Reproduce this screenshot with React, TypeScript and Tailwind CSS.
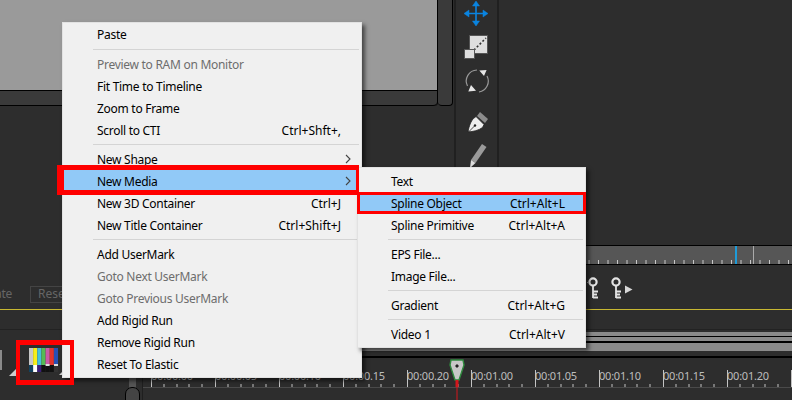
import React from "react";

type Item = { t: string; s?: string; d?: boolean; arrow?: boolean; on?: boolean };
type Row = Item | "sep";

const main: Row[] = [
  { t: "Preview to RAM on Monitor", d: true },
  { t: "Fit Time to Timeline" },
  { t: "Zoom to Frame" },
  { t: "Scroll to CTI", s: "Ctrl+Shft+," },
  "sep",
  { t: "New Shape", arrow: true },
  { t: "New Media", arrow: true, on: true },
  { t: "New 3D Container", s: "Ctrl+J" },
  { t: "New Title Container", s: "Ctrl+Shift+J" },
  "sep",
  { t: "Add UserMark" },
  { t: "Goto Next UserMark", d: true },
  { t: "Goto Previous UserMark", d: true },
  { t: "Add Rigid Run" },
  { t: "Remove Rigid Run" },
  { t: "Reset To Elastic" },
];

const sub: Row[] = [
  { t: "Text" },
  { t: "Spline Object", s: "Ctrl+Alt+L", on: true },
  { t: "Spline Primitive", s: "Ctrl+Alt+A" },
  "sep",
  { t: "EPS File..." },
  { t: "Image File..." },
  "sep",
  { t: "Gradient", s: "Ctrl+Alt+G" },
  "sep",
  { t: "Video 1", s: "Ctrl+Alt+V" },
];

function Sep({ tall }: { tall?: boolean }) {
  return (
    <div className={`${tall ? "h-[8px]" : "h-[7px]"} flex items-center pl-[30px] pr-[2px]`}>
      <div className="h-px w-full bg-[#d4d4d4]" />
    </div>
  );
}

function MenuRow({ r, pad }: { r: Item; pad: string }) {
  return (
    <div
      className={`h-[22px] flex items-center justify-between ${pad} ${r.arrow ? "pr-[11px]" : "pr-[20px]"} ${r.on ? "bg-[#91c9f7]" : ""} ${r.d ? "text-[#6d6d6d]" : "text-black"}`}
    >
      <span className="tracking-[-0.28px] pt-[2px]">{r.t}</span>
      {r.s && <span className="pt-[2px]">{r.s}</span>}
      {r.arrow && (
        <svg width="6" height="10" viewBox="0 0 6 10" className="mr-[-1px]">
          <path d="M1 1l4 4-4 4" fill="none" stroke="#444" strokeWidth="1.1" />
        </svg>
      )}
    </div>
  );
}

function Key({ arrow, stub }: { arrow?: boolean; stub?: boolean }) {
  return (
    <svg width="23" height="24" viewBox="0 0 23 24" className="shrink-0">
      <circle cx="6" cy="6" r="3.6" fill="none" stroke="#e4e4e4" strokeWidth="2.2" />
      <circle cx="6" cy="6" r="1" fill="#2d2d2d" />
      <path d="M6 10v12M6 15.5h5M6 18.5h4M6 21.5h5" stroke="#e4e4e4" strokeWidth="1.8" fill="none" />
      {stub && <path d="M0 6.5h2" stroke="#999" />}
      {arrow && <path d="M15 9.5l7.5 4-7.5 4z" fill="#d8d8d8" />}
    </svg>
  );
}

function Tools() {
  return (
    <svg width="41" height="172" viewBox="1 0 41 172" className="shrink-0">
      <g fill="#0a84e0" stroke="#0a84e0">
        <path d="M21 4v19M12 13.5h18" strokeWidth="1.6" fill="none" />
        <path d="M21 1l3.5 5h-7zM21 26l3.5-5h-7zM9 13.5l5-3.5v7zM33 13.5l-5-3.5v7z" strokeWidth=".5" />
      </g>
      <rect x="14.5" y="35.5" width="18" height="18" fill="#dedede" stroke="#555" />
      <path d="M19 50L31 38" stroke="#333" strokeWidth="1.6" strokeDasharray="2 2" />
      <rect x="9.5" y="49.5" width="10" height="9" fill="#dedede" stroke="#555" />
      <path d="M12.5 86a11 11 0 0 1 9.5-16M32 76a11 11 0 0 1-8 16" fill="none" stroke="#999" strokeWidth="1.2" />
      <path d="M24.3 70.6L31.6 70 29 76zM13.3 91.6L21 90.7 16 85z" fill="#e6e6e6" />
      <path d="M25 112l8 7-3 4-8-7z" fill="#8c8c8c" />
      <path d="M21 116.5l8 8-1.5 3c-4 3-9 4-14.5 4.5 1-6 3-11 5.5-13.5z" fill="#eee" stroke="#222" strokeWidth=".8" />
      <path d="M13.5 132l6-6" stroke="#222" strokeWidth=".8" />
      <circle cx="20" cy="125.5" r="1.2" fill="#222" />
      <path d="M16 160l11-16 4.5 3-11 16z" fill="#9a9a9a" />
      <path d="M15 168l1-8 4.5 3z" fill="#ddd" />
    </svg>
  );
}

function BarsLogo() {
  const top = ["#c8c8c8", "#f6ee1a", "#45c3dc", "#55bb55", "#cc5aa8", "#e3342b", "#2650b5"];
  const bottom = ["#12425f", "#fff", "#3b1f7a", "#111", "#111", "#111", "#333"];
  return (
    <svg width="29" height="25" viewBox="0 0 29 25">
      {top.map((c, i) => (
        <rect key={c} x={i * 4.15} y="0" width="4.15" height="17" fill={c} />
      ))}
      {bottom.map((c, i) => (
        <rect key={i} x={i * 4.15} y="17" width="4.15" height="7" fill={c} />
      ))}
      <rect x="25" y="16" width="4" height="2" fill="#ddd" />
      <rect x="16.6" y="16" width="4" height="2" fill="#ddd" />
    </svg>
  );
}

function TimeCell({ label }: { label: string }) {
  return (
    <div className="relative w-[64px] h-[29px] shrink-0">
      <svg width="64" height="29" viewBox="0 0 64 29" className="absolute left-0 top-0">
        <path d="M.5 12V29" stroke="#c4c4c4" />
        <path d="M13 26v3M26 26v3M38 26v3M51 26v3" stroke="#c4c4c4" />
      </svg>
      <span className="absolute left-0 top-[11px] text-[11px] leading-[13px] text-[#bdbdbd] tracking-[-0.02em] whitespace-nowrap">
        {label}
      </span>
    </div>
  );
}

export default function App() {
  const labels = ["00:00.00", "00:00.05", "00:00.10", "00:00.15", "00:00.20", "00:01.00", "00:01.05", "00:01.10", "00:01.15", "00:01.20", "00:01.25"];
  return (
    <div
      className="relative w-[792px] h-[400px] overflow-hidden bg-[#2d2d2d] text-[12px]"
      style={{ fontFamily: '"Noto Sans", sans-serif' }}
    >
      {/* top */}
      <div className="flex h-[245px]">
        <div className="w-[454px] shrink-0 flex items-start">
          <div className="w-[438px] h-[106px] flex flex-col shrink-0 border-r border-black rounded-br-[4px]">
            <div className="h-[90px] bg-[#9a9a9a]" />
            <div className="h-[16px] bg-[#3a3a3a] border-y border-black rounded-br-[4px]" />
          </div>
          <div className="w-[15px] h-[106px] bg-[#3a3a3a] border-r border-b border-black rounded-b-[4px]" />
        </div>
        <div className="w-[45px] shrink-0 border-x-[2px] border-[#202020] overflow-hidden">
          <Tools />
        </div>
        <div className="flex-1" />
      </div>

      {/* ruler */}
      <div className="h-[20px] ml-[500px] bg-[#565656] border-y border-black relative">
        <svg width="292" height="18" viewBox="0 0 292 18" className="absolute left-0 top-0">
          {Array.from({ length: 31 }).map((_, i) => (
            <path key={i} d={`M${3.5 + i * 9.5} 14v4`} stroke="#c8c8c8" />
          ))}
          <rect x="235" y="0" width="2" height="18" fill="#1e9bd8" />
          <path d="M253.5 0v18" stroke="#aaa" />
        </svg>
      </div>

      {/* control row */}
      <div className="h-[45px] flex items-center border-b border-[#c8b832] overflow-hidden">
        <span className="text-[#666] w-[35px] ml-[-5px] pt-[14px] leading-[16px] shrink-0 tracking-[-0.3px]">ate</span>
        <div className="w-[40px] h-[17px] mt-[14px] border border-[#444] text-[#666] pl-[7px] leading-[14px] shrink-0">Reset</div>
        <div className="flex ml-[517px] mt-[2px]">
          <Key stub />
          <Key arrow />
        </div>
      </div>

      {/* strips */}
      <div className="h-[20px] border-b border-[#222]" />
      <div className="h-[28px] ml-[142px] flex flex-col pt-[2px]">
        <div className="h-[4px] bg-[#8a8a8a]" />
        <div className="h-px bg-black" />
        <div className="h-[4px] bg-[#8a8a8a]" />
        <div className="h-[2px] bg-black" />
        <div className="h-[8px] bg-[#8a8a8a]" />
        <div className="flex-1" />
        <div className="h-[2px] bg-black" />
      </div>

      {/* timeline */}
      <div className="relative flex h-[42px] ml-[142px] border-l border-[#1f1f1f]">
        <div className="flex pl-[8px] h-[30px] border-b border-[#4a4a4a] w-full overflow-hidden">
          {labels.map((l) => (
            <TimeCell key={l} label={l} />
          ))}
        </div>
      </div>

      {/* colour bar icon */}
      <div className="absolute left-[29px] top-[348px]">
        <BarsLogo />
      </div>
      <div className="absolute left-0 top-[350px] w-[2px] h-[20px] bg-[#8a8a8a]" />
      <svg className="absolute left-[9px] top-[369px]" width="7" height="7" viewBox="0 0 7 7">
        <path d="M7 0v7H0z" fill="#ccc" />
      </svg>
      <svg className="absolute left-[59px] top-[372px]" width="3" height="3" viewBox="0 0 3 3">
        <path d="M3 0v3H0z" fill="#ccc" />
      </svg>
      {/* slider thumb */}
      <div className="absolute left-[129px] top-[378px] w-[7px] h-[10px] bg-[#555]" />
      <div className="absolute left-[125px] top-[387px] w-[15px] h-[16px] bg-[#444] border border-black rounded-t-[7px]" />

      {/* playhead */}
      <svg className="absolute left-[448px] top-[357px]" width="18" height="43" viewBox="0 0 18 43">
        <path d="M3 3h12l1 5-5 15H7L2 8z" fill="#c8c8c8" stroke="#2f8a3e" strokeWidth="1.4" />
        <path d="M9 7l2 2-2 2-2-2z" fill="#222" />
        <rect x="7.5" y="23" width="3" height="7" fill="#d3161c" />
        <rect x="8.5" y="30" width="1" height="13" fill="#d3161c" />
      </svg>

      {/* context menu */}
      <div className="absolute left-[62px] top-[22px] w-[300px] h-[356px] bg-[#f0f0f0] border border-[#e2e2e2] shadow-[3px_3px_4px_rgba(0,0,0,0.55)]">
        <MenuRow r={{ t: "Paste" }} pad="pl-[34px]" />
        <Sep tall />
        {main.map((r, i) => (r === "sep" ? <Sep key={i} /> : <MenuRow key={i} r={r} pad="pl-[34px]" />))}
      </div>

      {/* sub menu */}
      <div className="absolute left-[357px] top-[167px] w-[229px] h-[181px] bg-[#f0f0f0] border border-[#e2e2e2] pt-[2px] shadow-[3px_3px_4px_rgba(0,0,0,0.55)]">
        {sub.map((r, i) => (r === "sep" ? <Sep key={i} /> : <MenuRow key={i} r={r} pad="pl-[33px]" />))}
      </div>

      {/* annotations */}
      <div className="absolute left-[57px] top-[165px] w-[302px] h-[30px] border-y-[5px] border-l-[7px] border-r-[3px] border-[#ff0000]" />
      <div className="absolute left-[357px] top-[192px] w-[229px] h-[22px] border-[3px] border-[#ff0000]" />
      <div className="absolute left-[16px] top-[340px] w-[58px] h-[45px] border-y-[5px] border-x-[4px] border-[#ff0000]" />
    </div>
  );
}
